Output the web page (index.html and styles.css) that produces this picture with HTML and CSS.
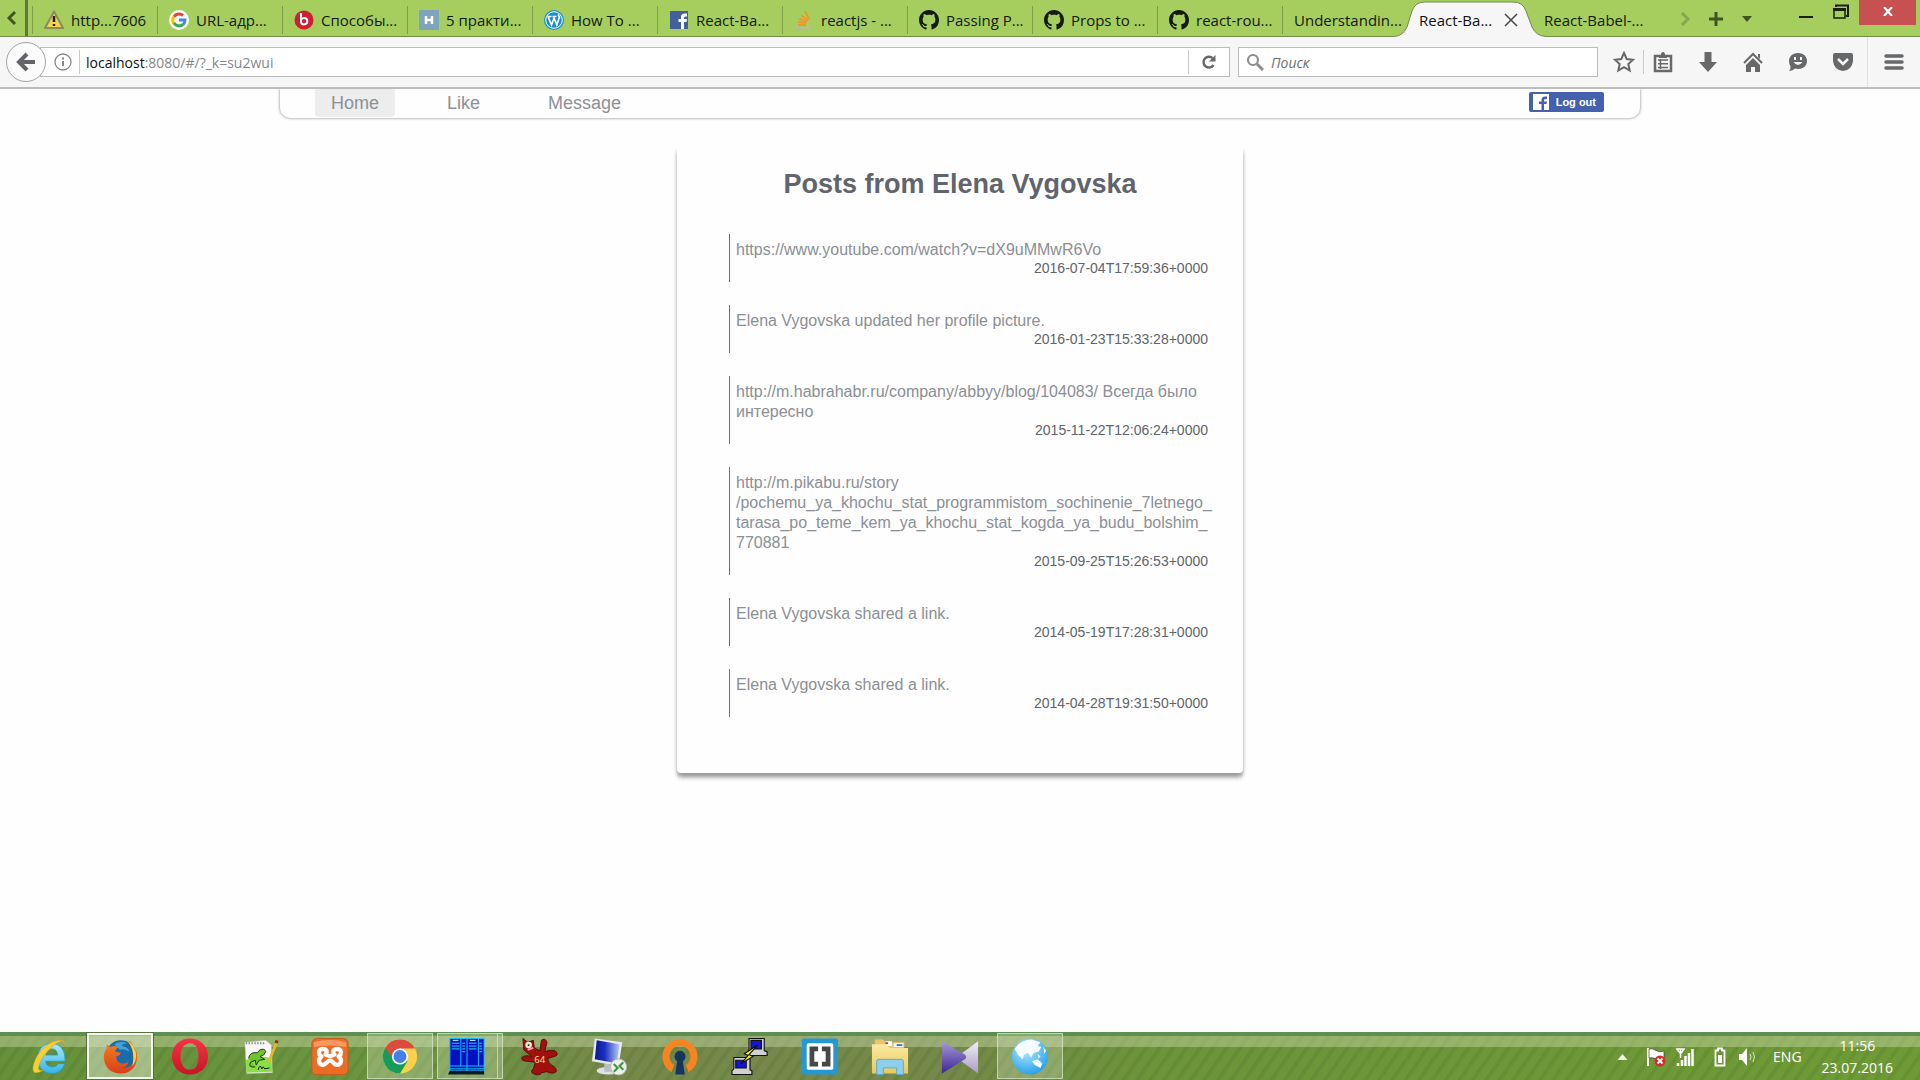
FILE: index.html
```html
<!DOCTYPE html>
<html lang="en">
<head>
<meta charset="utf-8">
<title>React-Babel</title>
<link rel="stylesheet" href="styles.css">
</head>
<body>
<svg class="defs" aria-hidden="true">
  <symbol id="github" viewBox="0 0 16 16"><path d="M8 0C3.58 0 0 3.58 0 8c0 3.54 2.29 6.53 5.47 7.59.4.07.55-.17.55-.38 0-.19-.01-.82-.01-1.49-2.01.37-2.53-.49-2.69-.94-.09-.23-.48-.94-.82-1.13-.28-.15-.68-.52-.01-.53.63-.01 1.08.58 1.23.82.72 1.21 1.87.87 2.33.66.07-.52.28-.87.51-1.07-1.78-.2-3.64-.89-3.64-3.95 0-.87.31-1.59.82-2.15-.08-.2-.36-1.02.08-2.12 0 0 .67-.21 2.2.82.64-.18 1.32-.27 2-.27s1.36.09 2 .27c1.53-1.04 2.2-.82 2.2-.82.44 1.1.16 1.92.08 2.12.51.56.82 1.27.82 2.15 0 3.07-1.87 3.75-3.65 3.95.29.25.54.73.54 1.48 0 1.07-.01 1.93-.01 2.2 0 .21.15.46.55.38A8.01 8.01 0 0 0 16 8c0-4.42-3.58-8-8-8z" fill="#141c10"/></symbol>
  <linearGradient id="gBlue" x1="0" y1="0" x2="0" y2="1"><stop offset="0" stop-color="#a8ecfb"/><stop offset="1" stop-color="#33b3ea"/></linearGradient>
  <linearGradient id="gOpera" x1="0" y1="0" x2="0" y2="1"><stop offset="0" stop-color="#fb3145"/><stop offset="1" stop-color="#c41526"/></linearGradient>
  <linearGradient id="gFolder" x1="0" y1="0" x2="0" y2="1"><stop offset="0" stop-color="#fbe9a4"/><stop offset="1" stop-color="#e9c85c"/></linearGradient>
  <linearGradient id="gScreen" x1="0" y1="0" x2="1" y2="0"><stop offset="0" stop-color="#0b1a8c"/><stop offset=".4" stop-color="#1a2ec0"/><stop offset="1" stop-color="#b9ccf4"/></linearGradient>
  <linearGradient id="gViolet" x1="0" y1="0" x2="0" y2="1"><stop offset="0" stop-color="#a79ad6"/><stop offset="1" stop-color="#3d2594"/></linearGradient>
  <linearGradient id="gSilver" x1="0" y1="0" x2="0" y2="1"><stop offset="0" stop-color="#f2eff8"/><stop offset="1" stop-color="#a79cc4"/></linearGradient>
  <linearGradient id="gFox" x1="0" y1="0" x2="0" y2="1"><stop offset="0" stop-color="#f58220"/><stop offset="1" stop-color="#d63f1a"/></linearGradient>
  <radialGradient id="gGlobe" cx=".4" cy=".3" r=".8"><stop offset="0" stop-color="#b9ecff"/><stop offset="1" stop-color="#1599e6"/></radialGradient>
</svg>

<header class="browser">
  <div class="tabbar">
    <button class="scroll" aria-label="Scroll tabs left"><svg width="10" height="16" viewBox="0 0 10 16"><path d="M8 2 2 8l6 6" fill="none" stroke="#3f5424" stroke-width="3"/></svg></button>
    <nav class="tabs" aria-label="Tabs">
      <a class="tab" href="#t1"><svg viewBox="0 0 20 20"><path d="M10 1.500 19 18H1z" fill="#f3d34b" stroke="#8c8a62" stroke-width="2" stroke-linejoin="round"/><path d="M10 6v6M10 14v2" stroke="#26200a" stroke-width="2.500"/></svg><span>http...7606</span></a>
      <a class="tab" href="#t2"><svg viewBox="0 0 20 20"><circle cx="10" cy="10" r="10" fill="#fff"/><g fill="none" stroke-width="3"><path d="M5 6.800A6 6 0 0 1 14 5.500" stroke="#ea4335"/><path d="M5 6.500a6 6 0 0 0 0 7" stroke="#fbbc05"/><path d="M5 13a6 6 0 0 0 9 1.500" stroke="#34a853"/><path d="M10 10h6a6 6 0 0 1-2 4.600" stroke="#4285f4"/></g></svg><span>URL-адр...</span></a>
      <a class="tab" href="#t3"><svg viewBox="0 0 20 20"><circle cx="10" cy="10" r="9.500" fill="#cf1f35"/><path d="M7 3v9a3.200 3.200 0 1 0 3-4c-1.500 0-2.500 1-3 2" fill="none" stroke="#fff" stroke-width="2"/></svg><span>Способы...</span></a>
      <a class="tab" href="#t4"><svg viewBox="0 0 20 20"><path d="M0 0h20v20H0z" fill="#7ea5bb"/><path d="M7 6v8M13 6v8M7 10h6" stroke="#fff" stroke-width="2.500"/></svg><span>5 практи...</span></a>
      <a class="tab" href="#t5"><svg viewBox="0 0 20 20"><circle cx="10" cy="10" r="10" fill="#1b8fc9"/><circle cx="10" cy="10" r="8.300" fill="none" stroke="#fff"/><path d="M4 6.500 7.500 15 10 8l2.800 7L15.500 7 14 4.500M3.500 6.500h4M8.500 6.500h4" fill="none" stroke="#fff" stroke-width="1.600"/></svg><span>How To ...</span></a>
      <a class="tab" href="#t6"><svg viewBox="0 0 20 20"><path d="M1 1h18v18H1z" fill="#43609c"/><path d="M12 19v-7H9.500V9H12V7q0-3.500 3.500-3.500H18v3h-1.600Q15 6.500 15 8v1h3l-.5 3H15v7z" fill="#fff"/></svg><span>React-Ba...</span></a>
      <a class="tab" href="#t7"><svg viewBox="0 0 20 20"><path d="M2 14v4h12v-4" fill="none" stroke="#b9bda0" stroke-width="2"/><path d="M4 15h8M4 12l8 1M5 8.500l8 3.500M7 5l7 5.500M11 1l4 8" stroke="#eb9a2c" stroke-width="2"/></svg><span>reactjs - ...</span></a>
      <a class="tab" href="#t8"><svg><use href="#github"/></svg><span>Passing P...</span></a>
      <a class="tab" href="#t9"><svg><use href="#github"/></svg><span>Props to ...</span></a>
      <a class="tab" href="#t10"><svg><use href="#github"/></svg><span>react-rou...</span></a>
      <a class="tab" href="#t11"><span>Understandin...</span></a>
      <a class="tab active" href="#t12" aria-current="page"><svg class="shape" viewBox="0 0 152 37" preserveAspectRatio="none"><path d="M0 36.500Q9 36 13 27L18 11Q21 2 31 2H119Q129 2 132 11L138 27Q142 36 152 36.500V37H0z" fill="#f6f6f7"/><path d="M0 36.500Q9 36 13 27L18 11Q21 2 31 2H119Q129 2 132 11L138 27Q142 36 152 36.500" fill="none" stroke="#73894f"/></svg><span>React-Ba...</span><svg class="close" viewBox="0 0 14 14"><path d="m1 1 12 12M13 1 1 13" stroke="#45474a" stroke-width="1.500"/></svg></a>
      <a class="tab last" href="#t13"><span>React-Babel-...</span></a>
    </nav>
    <div class="tabtools">
      <svg width="10" height="16" viewBox="0 0 10 16"><path d="m2 2 6 6-6 6" fill="none" stroke="#84a74d" stroke-width="3"/></svg>
      <button aria-label="New tab"><svg width="16" height="16" viewBox="0 0 16 16"><path d="M8 1v14M1 8h14" stroke="#3f5424" stroke-width="3"/></svg></button>
      <button aria-label="List all tabs"><svg width="10" height="6" viewBox="0 0 10 6"><path d="M0 0h10L5 6z" fill="#3f5424"/></svg></button>
    </div>
    <div class="window">
      <button aria-label="Minimize"><svg width="14" height="14" viewBox="0 0 14 14"><path d="M0 12h14" stroke="#17200c" stroke-width="2"/></svg></button>
      <button aria-label="Restore"><svg width="16" height="16" viewBox="0 0 16 16"><path d="M3 3V1.500h12V12h-2" fill="none" stroke="#17200c" stroke-width="2"/><path d="M1 5h11v9H1z" fill="none" stroke="#17200c" stroke-width="1.500"/><path d="M0 5.500h13" stroke="#17200c" stroke-width="3"/></svg></button>
      <button class="quit" aria-label="Close"><svg width="10" height="9" viewBox="0 0 10 9"><path d="m1 0 8 9M9 0 1 9" stroke="#fff" stroke-width="2.200"/></svg></button>
    </div>
  </div>

  <div class="toolbar">
    <button class="back" aria-label="Back"><svg width="20" height="20" viewBox="0 0 20 20"><path d="M11 2 3 10l8 8M4 10h15" fill="none" stroke="#636568" stroke-width="4"/></svg></button>
    <div class="address">
      <svg width="18" height="18" viewBox="0 0 18 18"><circle cx="9" cy="9" r="8" fill="none" stroke="#858789" stroke-width="1.300"/><path d="M9 8v5M9 4.500v2" stroke="#858789" stroke-width="2"/></svg>
      <i class="line"></i>
      <div class="url" role="textbox" tabindex="0" aria-label="Address"><b>localhost</b>:8080/#/?_k=su2wui</div>
      <i class="line"></i>
      <button class="reload" aria-label="Reload"><svg width="16" height="16" viewBox="0 0 16 16"><path d="M12.500 11A5.400 5.400 0 1 1 11.500 4" fill="none" stroke="#66686a" stroke-width="2.500"/><path d="M14.500 1v6.500H8z" fill="#66686a"/></svg></button>
    </div>
    <div class="search">
      <svg width="18" height="18" viewBox="0 0 18 18"><circle cx="7" cy="7" r="5" fill="none" stroke="#8b8d8f" stroke-width="2.200"/><path d="m11 11 6 6" stroke="#8b8d8f" stroke-width="3"/></svg>
      <input type="text" placeholder="Поиск" aria-label="Поиск">
    </div>
    <button class="star" aria-label="Bookmark"><svg width="22" height="22" viewBox="0 0 22 22"><path d="m11 2 2.700 6 6.300.7-4.700 4.300 1.400 6.500L11 16.200 5.300 19.500 6.700 13 2 8.700 8.300 8z" fill="none" stroke="#66686a" stroke-width="2"/></svg></button>
    <i class="line"></i>
    <div class="tools">
      <button aria-label="Bookmarks list"><svg width="22" height="22" viewBox="0 0 22 22"><path d="M3 5h16v15H3z" fill="none" stroke="#66686a" stroke-width="2.500"/><path d="M7 4h2q0-3 2-3t2 3h2v3H7z" fill="#66686a"/><path d="M6 9h10M6 12.700h10M6 16.500h10M8.500 8v10" fill="none" stroke="#66686a" stroke-width="1.500"/></svg></button>
      <button aria-label="Downloads"><svg width="22" height="22" viewBox="0 0 22 22"><path d="M7.500 1h7v10H20l-9 10L2 11h5.500z" fill="#66686a"/></svg></button>
      <button aria-label="Home page"><svg width="22" height="22" viewBox="0 0 22 22"><path d="m2 12 9-9 9 9" fill="none" stroke="#66686a" stroke-width="2"/><path d="m11 7 7 7v7h-5v-5H9v5H4v-7zM16 3h2v5l-2-2z" fill="#66686a"/></svg></button>
      <button aria-label="Chat"><svg width="22" height="22" viewBox="0 0 22 22"><path d="M11 2c6 0 9 4 9 8s-3 8-9 8q-1 0-3-.4Q6 20 2 20q2-2 1.500-4.500Q2 13 2 10c0-4 3-8 9-8z" fill="#66686a"/><path d="M6.500 11q4.500 6 9 0zM7 6h2v3H7zM13 6h2v3h-2z" fill="#f6f6f7"/></svg></button>
      <button aria-label="Pocket"><svg width="22" height="22" viewBox="0 0 22 22"><path d="M3 2h16q2 0 2 2v6q-1 9-10 10Q2 19 1 10V4q0-2 2-2z" fill="#66686a"/><path d="m6 8 5 5 5-5" fill="none" stroke="#f6f6f7" stroke-width="2.500"/></svg></button>
    </div>
    <button class="menu" aria-label="Menu"><svg width="20" height="18" viewBox="0 0 20 18"><path d="M2 3h16M2 9h16M2 15h16" stroke="#66686a" stroke-width="3.500" stroke-linecap="round"/></svg></button>
  </div>
</header>

<main class="page">
  <nav class="sitenav">
    <a class="current" href="#/">Home</a>
    <a href="#/like">Like</a>
    <a href="#/message">Message</a>
    <button class="logout"><svg width="16" height="16" viewBox="0 0 16 16"><path d="M0 0h16v16H0z" fill="#fff"/><path d="M8.500 16v-6H6V7.500h2.500V6q0-3.500 3.500-3.500h2V5h-1.400Q11 5 11 6.300v1.200h3l-.5 2.500H11v6z" fill="#4561ae"/></svg>Log out</button>
  </nav>
  <section class="card">
    <h1>Posts from Elena Vygovska</h1>
    <div class="posts">
      <article class="post"><p>https://www.youtube.com/watch?v=dX9uMMwR6Vo</p><time>2016-07-04T17:59:36+0000</time></article>
      <article class="post"><p>Elena Vygovska updated her profile picture.</p><time>2016-01-23T15:33:28+0000</time></article>
      <article class="post"><p>http://m.habrahabr.ru/company/abbyy/blog/104083/ Всегда было интересно</p><time>2015-11-22T12:06:24+0000</time></article>
      <article class="post"><p>http://m.pikabu.ru/story<wbr>/pochemu_ya_khochu_stat_programmistom_sochinenie_7letnego_<wbr>tarasa_po_teme_kem_ya_khochu_stat_kogda_ya_budu_bolshim_<wbr>770881</p><time>2015-09-25T15:26:53+0000</time></article>
      <article class="post"><p>Elena Vygovska shared a link.</p><time>2014-05-19T17:28:31+0000</time></article>
      <article class="post"><p>Elena Vygovska shared a link.</p><time>2014-04-28T19:31:50+0000</time></article>
    </div>
  </section>
</main>

<footer class="taskbar">
  <div class="apps">
    <button aria-label="Internet Explorer"><svg viewBox="0 0 40 40"><path d="M36 25H15.500q.5 6 7 6 4.500 0 6-3.500h7Q32 38 22 38 7.500 37 7 22 7.500 7 22 6q14 1 14 19zM15.500 18.500H28Q27.500 12 22 12t-6.500 6.500z" fill="url(#gBlue)" stroke="#2796cf" stroke-width=".8"/><path d="M35 9Q37 2 29 3 15 5 6 20-1 34 4 37q4 1 10-3-6 2-6-2 1-8 9-17Q26 5 32 4q3 0 3 5z" fill="#f6cf35" stroke="#c59b1a" stroke-width=".5"/></svg></button>
    <button class="open focus" aria-label="Firefox"><svg viewBox="0 0 40 40"><circle cx="21" cy="19" r="16" fill="#1b6ba8"/><path d="M14 7q6-4 14-1-5 0-6 3 7 1 8 6-6-4-10-2z" fill="#3fa5d8"/><path d="M28 4q11 6 10 18-2 15-17 16Q4 37 3 21q0-6 3-9V7l4 3q4-2 8 0-3 2-3 5l6 1q-1 3-5 4 0 6 5 7 6 1 8-2-1 6-8 7 13 1 15-11 1-10-5-17z" fill="url(#gFox)"/><path d="M28 4q9 5 9 16-1 7-4 10 1-4 1-9 0-10-6-17z" fill="#ffd23e"/></svg></button>
    <button aria-label="Opera"><svg viewBox="0 0 40 40"><path fill-rule="evenodd" d="M20 1c11 0 19 8 19 19s-8 19-19 19S1 31 1 20 9 1 20 1zm0 5c-6 0-10 5-10 14s4 14 10 14 9-5 9-14-3-14-9-14z" fill="url(#gOpera)"/></svg></button>
    <button aria-label="Notepad++"><svg viewBox="0 0 40 40"><path d="m4 5 22-2 6 5 1 29-27 1z" fill="#f7f8f5" stroke="#b9bdb5" stroke-width=".6"/><path d="M5 24q14-7 27-2l1 14-27 1z" fill="#8ade48"/><path d="M5 6h20" stroke="#888" stroke-width="2" stroke-dasharray="1.500 1.500"/><path d="M8 22q1-7 9-6l3-3q5-2 6 2-1 4-6 5l5 3-6 1-3 5-1-5-5 2q-3 6 5 5" fill="#6fc628" stroke="#252e1c"/><path d="M18 34q2-7 4-1 1-4 3 0l5-1" fill="none" stroke="#111"/><path d="M29 26 38 4" stroke="#eab529" stroke-width="3"/><path d="m37 6 1-3" stroke="#9b3021" stroke-width="3.500"/></svg></button>
    <button aria-label="XAMPP"><svg viewBox="0 0 40 40"><rect x="1" y="1" width="38" height="38" rx="5" fill="#ec6c25" stroke="#c65a1c"/><path d="M3 5q17-5 34 0v5q-17-3-34 0z" fill="#f59a62"/><path d="M16 17q2-5-4-5-5 1-3 6l2 2q-4 3-2 7 4 4 8-1 3-4 6 0 4 5 8 1 2-4-2-7l2-2q2-5-3-6-6 0-4 5" fill="none" stroke="#fff" stroke-width="4.500" stroke-linecap="round" stroke-linejoin="round"/><path d="M15 18q5 3 10 0" fill="none" stroke="#fff" stroke-width="4" stroke-linecap="round"/></svg></button>
    <button class="open" aria-label="Chrome"><svg viewBox="0 0 40 40"><circle cx="20" cy="20" r="18" fill="#fcd04b"/><path d="M4.400 11A18 18 0 0 0 20 38l8-13-8-5z" fill="#169c5a"/><path d="M4.400 11A18 18 0 0 1 35.600 11.500H20Q14 13 12 21z" fill="#dc4b3e"/><circle cx="20" cy="20" r="8.500" fill="#fff"/><circle cx="20" cy="20" r="6.800" fill="#4480e8"/></svg></button>
    <button class="open stacked" aria-label="Far Manager"><svg viewBox="0 0 40 40"><path d="M2 1h36v34H2z" fill="#0610bf" stroke="#13c8ff"/><path d="M2 35h36v4H0z" fill="#0c1a28"/><path d="M13.500 1v29M20 1v34M32 1v29M2 30h36M2 33h36" stroke="#13c8ff"/><path d="M4 6h8M15 6h3M22 6h8M33 6h3M4 9h8M15 9h3M22 9h8M33 9h3M4 12h8M15 12h3M22 12h8M33 12h3M15 15h3M33 15h3" stroke="#22e3ff"/><path d="M5 3h6M23 3h6" stroke="#e6fbff"/></svg></button>
    <button aria-label="IDA 64"><svg viewBox="0 0 40 40"><path d="m2 1 5 4 6-2 1 8 6 3 1-8q0-5 4-4 4 2 1 8l-1 5q8-3 12 0 3 4-2 5l-7 2q0 4 4 7 6 3 5 7-3 3-10 0l-5 1q-3 4-9 1-4-2 0-5l2-7-9-1Q0 25 1 21q3-3 10-1l-8-7z" fill="#a0100c" stroke="#51100b"/><circle cx="8" cy="8" r="3.500" fill="#f1e6dc"/><circle cx="8" cy="8" r="1" fill="#111"/><path d="m7 13 6-2" stroke="#f0a0a0" stroke-width="2"/><text x="14" y="27" font-size="10" fill="#ffe5a0">64</text></svg></button>
    <button aria-label="Remote Desktop"><svg viewBox="0 0 40 40"><ellipse cx="18" cy="35" rx="12" ry="4" fill="#dfe2e5"/><path d="m14 27 8 2v7h-8z" fill="#b9bec4"/><path d="m4 1 29 4-4 25L1 25z" fill="#e5eaf0"/><path d="m6 3 24 4-3 20L4 23z" fill="url(#gScreen)"/><circle cx="29" cy="31" r="8.500" fill="#eef0ee" stroke="#aeb3ac"/><path d="m24 28 4 4-4 4M34 26l-4 4 4 4" fill="none" stroke="#3b9a3b" stroke-width="2.200"/></svg></button>
    <button aria-label="OpenVPN"><svg viewBox="0 0 40 40"><path d="M11 36.500A18.500 18.500 0 1 1 29 36.500L26 29a11 11 0 1 0-12 0z" fill="#f68420"/><path d="M20 14a6 6 0 0 1 3 11l2 14H15l2-14a6 6 0 0 1 3-11z" fill="#16355f"/></svg></button>
    <button aria-label="PuTTY"><svg viewBox="0 0 40 40"><g stroke="#111" stroke-width="1.200"><path d="M19 1h16v13l3 1v4H19l-2-3 2-3z" fill="#d0d2cf"/><path d="M21 3h11v9H21z" fill="#1512dc"/><path d="M3 21h17v13l2 1v4H1v-4l2-2z" fill="#d0d2cf"/><path d="M5 24h11v8H5z" fill="#1512dc"/><path d="M28 8 14 17l4 2-8 9 13-8-4-2z" fill="#ffee20"/></g></svg></button>
    <button aria-label="Brackets"><svg viewBox="0 0 40 40"><rect x="1" y="1" width="38" height="38" rx="2" fill="#2597d4"/><rect x="6" y="6" width="28" height="28" rx="2" fill="#fff"/><path d="M18 12h-6.500v16H18M22 12h6.500v16H22" fill="none" stroke="#474747" stroke-width="5"/></svg></button>
    <button aria-label="File Explorer"><svg viewBox="0 0 40 40"><path d="M4 5V2h9l2 3h20v8H4z" fill="#e8c66e"/><path d="M15 4h7v5h-7zM24 6h10v4H24z" fill="#fff"/><path d="M15 5h3v2h-3z" fill="#d0302a"/><path d="M27 7h6v2h-6z" fill="#3c78c9"/><path d="M1 7h15l4 4h19v27H1z" fill="url(#gFolder)"/><path d="M6 25q0-2 2-2h24q2 0 2 2v14h-7v-7H13v7H6z" fill="#8dd0ee" stroke="#58aad2"/></svg></button>
    <button aria-label="KMPlayer"><svg viewBox="0 0 40 40"><path d="M39 4v34L16 21z" fill="url(#gSilver)"/><path d="m1 4 24 14q3 3 0 5L1 38z" fill="url(#gViolet)"/></svg></button>
    <button class="open" aria-label="Browser"><svg viewBox="0 0 40 40"><circle cx="20" cy="20" r="19" fill="url(#gGlobe)"/><path d="M4 12Q10 2 22 2l9 3-3 4 4 1-3 5-5 1-3 5-3-5-4 2-2 5-5-5zM22 25l6-2 5 4-2 5-6-3zM28 17l3 3-2 2zM34 10l3 4-2 3z" fill="#f4fcff"/></svg></button>
  </div>
  <div class="tray">
    <svg width="11" height="6" viewBox="0 0 11 6"><path d="m5.500 0 5 6h-10z" fill="#f0f4ea"/></svg>
    <svg class="flag" width="20" height="20" viewBox="0 0 20 20"><path d="M2 1v18" stroke="#fff" stroke-width="2"/><path d="M3 2q4-1 6 1 4 3 9 1v8q-5 2-8 0-3-2-7-1z" fill="#fff" stroke="#38451f" stroke-width=".7"/><circle cx="14" cy="14" r="5.500" fill="#d9292b"/><path d="m11.500 11.500 5 5M16.500 11.500l-5 5" stroke="#fff" stroke-width="1.800"/></svg>
    <svg class="signal" width="18" height="18" viewBox="0 0 18 18"><path d="M2 18v-3M6 18v-6M9.500 18V8M13 18V5M16.500 18V1" stroke="#fff" stroke-width="2.500"/><path d="M0 1h9M1 1l3.500 5L8 1M4.500 1v9" fill="none" stroke="#fff" stroke-width="1.500"/></svg>
    <svg class="battery" width="12" height="20" viewBox="0 0 12 20"><path d="M1.500 3.500H4v-2h4v2h2.500v15h-9z" fill="none" stroke="#fff" stroke-width="1.800"/><path d="M4 8h4v8H4z" fill="#fff"/></svg>
    <svg width="18" height="20" viewBox="0 0 18 20"><path d="M1 7h3l5-6v18l-5-6H1z" fill="#fff"/><path d="M12 7q2 3 0 6M15 5q3 5 0 10" fill="none" stroke="#d9e6c4"/></svg>
    <span class="lang">ENG</span>
    <div class="clock"><span>11:56</span><span>23.07.2016</span></div>
  </div>
</footer>
</body>
</html>
```
FILE: styles.css
```css
* { box-sizing: border-box; }
body { margin: 0; min-height: 100vh; display: flex; flex-direction: column; background: #fefefe; font-family: "Liberation Sans", Arial, sans-serif; }
button { border: 0; padding: 0; background: none; font: inherit; display: flex; align-items: center; justify-content: center; }
a { color: inherit; text-decoration: none; }
svg { display: block; flex: none; }
.defs { position: absolute; width: 0; height: 0; }

/* Browser window */
.browser { font-family: "Open Sans", "Noto Sans", sans-serif; font-size: 14px; }
.line { width: 1px; height: 24px; background: #c9cbcd; }

.tabbar { height: 37px; display: flex; background: #a6ce5f; border-bottom: 1px solid #73894f; font-size: 15px; }
.scroll { width: 28px; padding-right: 2px; border-right: 3px solid #62793a; }
.tabs { display: flex; padding-left: 4px; }
.tab { width: 125px; display: flex; align-items: center; gap: 7px; padding: 4px 0 0 12px; color: #131a0b; white-space: nowrap; position: relative; }
.tab svg { width: 20px; height: 20px; }
.tab::before { content: ""; position: absolute; left: 0; top: 6px; bottom: 2px; width: 1px; background: #7f9d4a; }
.tab.active::before, .tab.last::before { content: none; }
.tab.active { color: #111; justify-content: space-between; padding-right: 14px; }
.tab.active span { position: relative; }
.tab .shape { position: absolute; left: -13px; top: 0; width: 152px; height: 37px; }
.tab .close { position: relative; width: 14px; height: 14px; }
.tabtools { display: flex; align-items: center; gap: 18px; margin-left: auto; padding-top: 2px; }
.window { display: flex; align-items: flex-start; gap: 20px; margin: 0 4px 0 47px; }
.window button { height: 24px; }
.window .quit { width: 57px; height: 25px; margin-left: -10px; background: #c75050; }
.window .quit svg { margin-bottom: 2px; }

.toolbar { height: 52px; display: flex; align-items: center; background: #f6f6f7; border-bottom: 2px solid #bcbcbe; }
.back { width: 40px; height: 40px; margin-left: 6px; flex: none; border: 1px solid #a2a4a6; border-radius: 50%; background: #fbfbfb; position: relative; }
.address { flex: 1; height: 30px; margin-left: -6px; padding-left: 13px; display: flex; align-items: center; background: #fff; border: 1px solid #b9bbbd; }
.address .line { margin-left: 7px; }
.url { flex: 1; padding-left: 6px; color: #85878a; }
.url b { font-weight: 400; color: #111; }
.reload { width: 40px; }
.search { width: 360px; height: 30px; margin-left: 8px; padding-left: 7px; display: flex; align-items: center; gap: 7px; background: #fff; border: 1px solid #b9bbbd; }
.search input { flex: 1; min-width: 0; border: 0; padding: 0; outline: 0; background: none; font: inherit; }
.search input::placeholder { color: #6d6f71; font-style: italic; }
.star { margin: 0 8px 0 15px; }
.tools { display: flex; gap: 23px; margin: 0 13px 0 8px; }
.menu { height: 50px; padding: 0 16px; border-left: 1px solid #e0e1e2; }

/* Site */
.page { flex: 1; display: flex; flex-direction: column; align-items: center; }
.sitenav { width: 100%; max-width: 1360px; padding: 0 36px 1px 35px; display: flex; align-items: flex-start; gap: 36px; font-size: 18px; line-height: 28px; color: #8d9096; border-radius: 0 0 10px 10px; box-shadow: 0 0 3px #777; clip-path: inset(0 -6px -6px -6px); }
.sitenav a { padding: 0 16px; border-radius: 0 0 4px 4px; }
.sitenav .current { background: #ededed; }
.logout { height: 20px; margin: 3px 0 0 auto; padding: 0 8px 0 4px; gap: 7px; border-radius: 2px; background: #4561ae; color: #fff; font-size: 11px; font-weight: 700; line-height: 20px; }
.card { width: 100%; max-width: 566px; margin: 28px 0; padding: 18px 0 33px; color: #5f646d; border-radius: 4px; box-shadow: 0 5px 5px -1px #999, 0 3px 3px #ccc; }
h1 { margin: 0 0 30px; text-align: center; font-size: 27px; line-height: 40px; }
.posts { padding: 0 35px 0 52px; }
.post { margin-bottom: 23px; padding: 6px 0 5px 6px; border-left: 1px solid #4a70be; }
.post p { margin: 0; font-size: 16px; line-height: 20px; color: #8b8f96; }
.post time { display: block; text-align: right; font-size: 14px; line-height: 17px; }

/* Desktop taskbar */
.taskbar {
  height: 48px; display: flex; justify-content: space-between; align-items: stretch;
  font-family: "Open Sans", "Noto Sans", sans-serif; font-size: 14px; color: #fff;
  background:
    linear-gradient(#5d8f50 4px, rgba(200, 215, 165, .45) 4px 15px, transparent 15px),
    repeating-linear-gradient(125deg, rgba(50, 80, 20, .12) 0 3px, transparent 5px 11px),
    linear-gradient(90deg, #66903a, #6c9540 20%, #75894a 32%, #74894a 50%, #6c943a 60%, #6f9b36);
}
.apps { display: flex; gap: 4px; padding: 1px 0 1px 17px; }
.apps button { width: 66px; border: 1px solid transparent; position: relative; }
.apps svg { width: 38px; height: 39px; }
.apps .open { background: rgba(220, 232, 200, .3); border-color: rgba(225, 235, 210, .65); }
.apps .focus { background: rgba(225, 232, 210, .5); border: 2px solid #f3f6ee; outline: 1px solid #56723a; }
.apps .stacked { padding-right: 6px; }
.apps .stacked::after { content: ""; position: absolute; top: 0; bottom: 0; right: 4px; width: 1px; background: rgba(225, 235, 210, .65); }
.tray { display: flex; align-items: center; padding-top: 1px; }
.flag { margin-left: 18px; }
.signal { margin-left: 10px; }
.battery { margin: 0 12px 0 20px; }
.lang { margin-left: 17px; }
.clock { margin: 0 27px 0 20px; display: flex; flex-direction: column; align-items: center; line-height: 22px; }
```
